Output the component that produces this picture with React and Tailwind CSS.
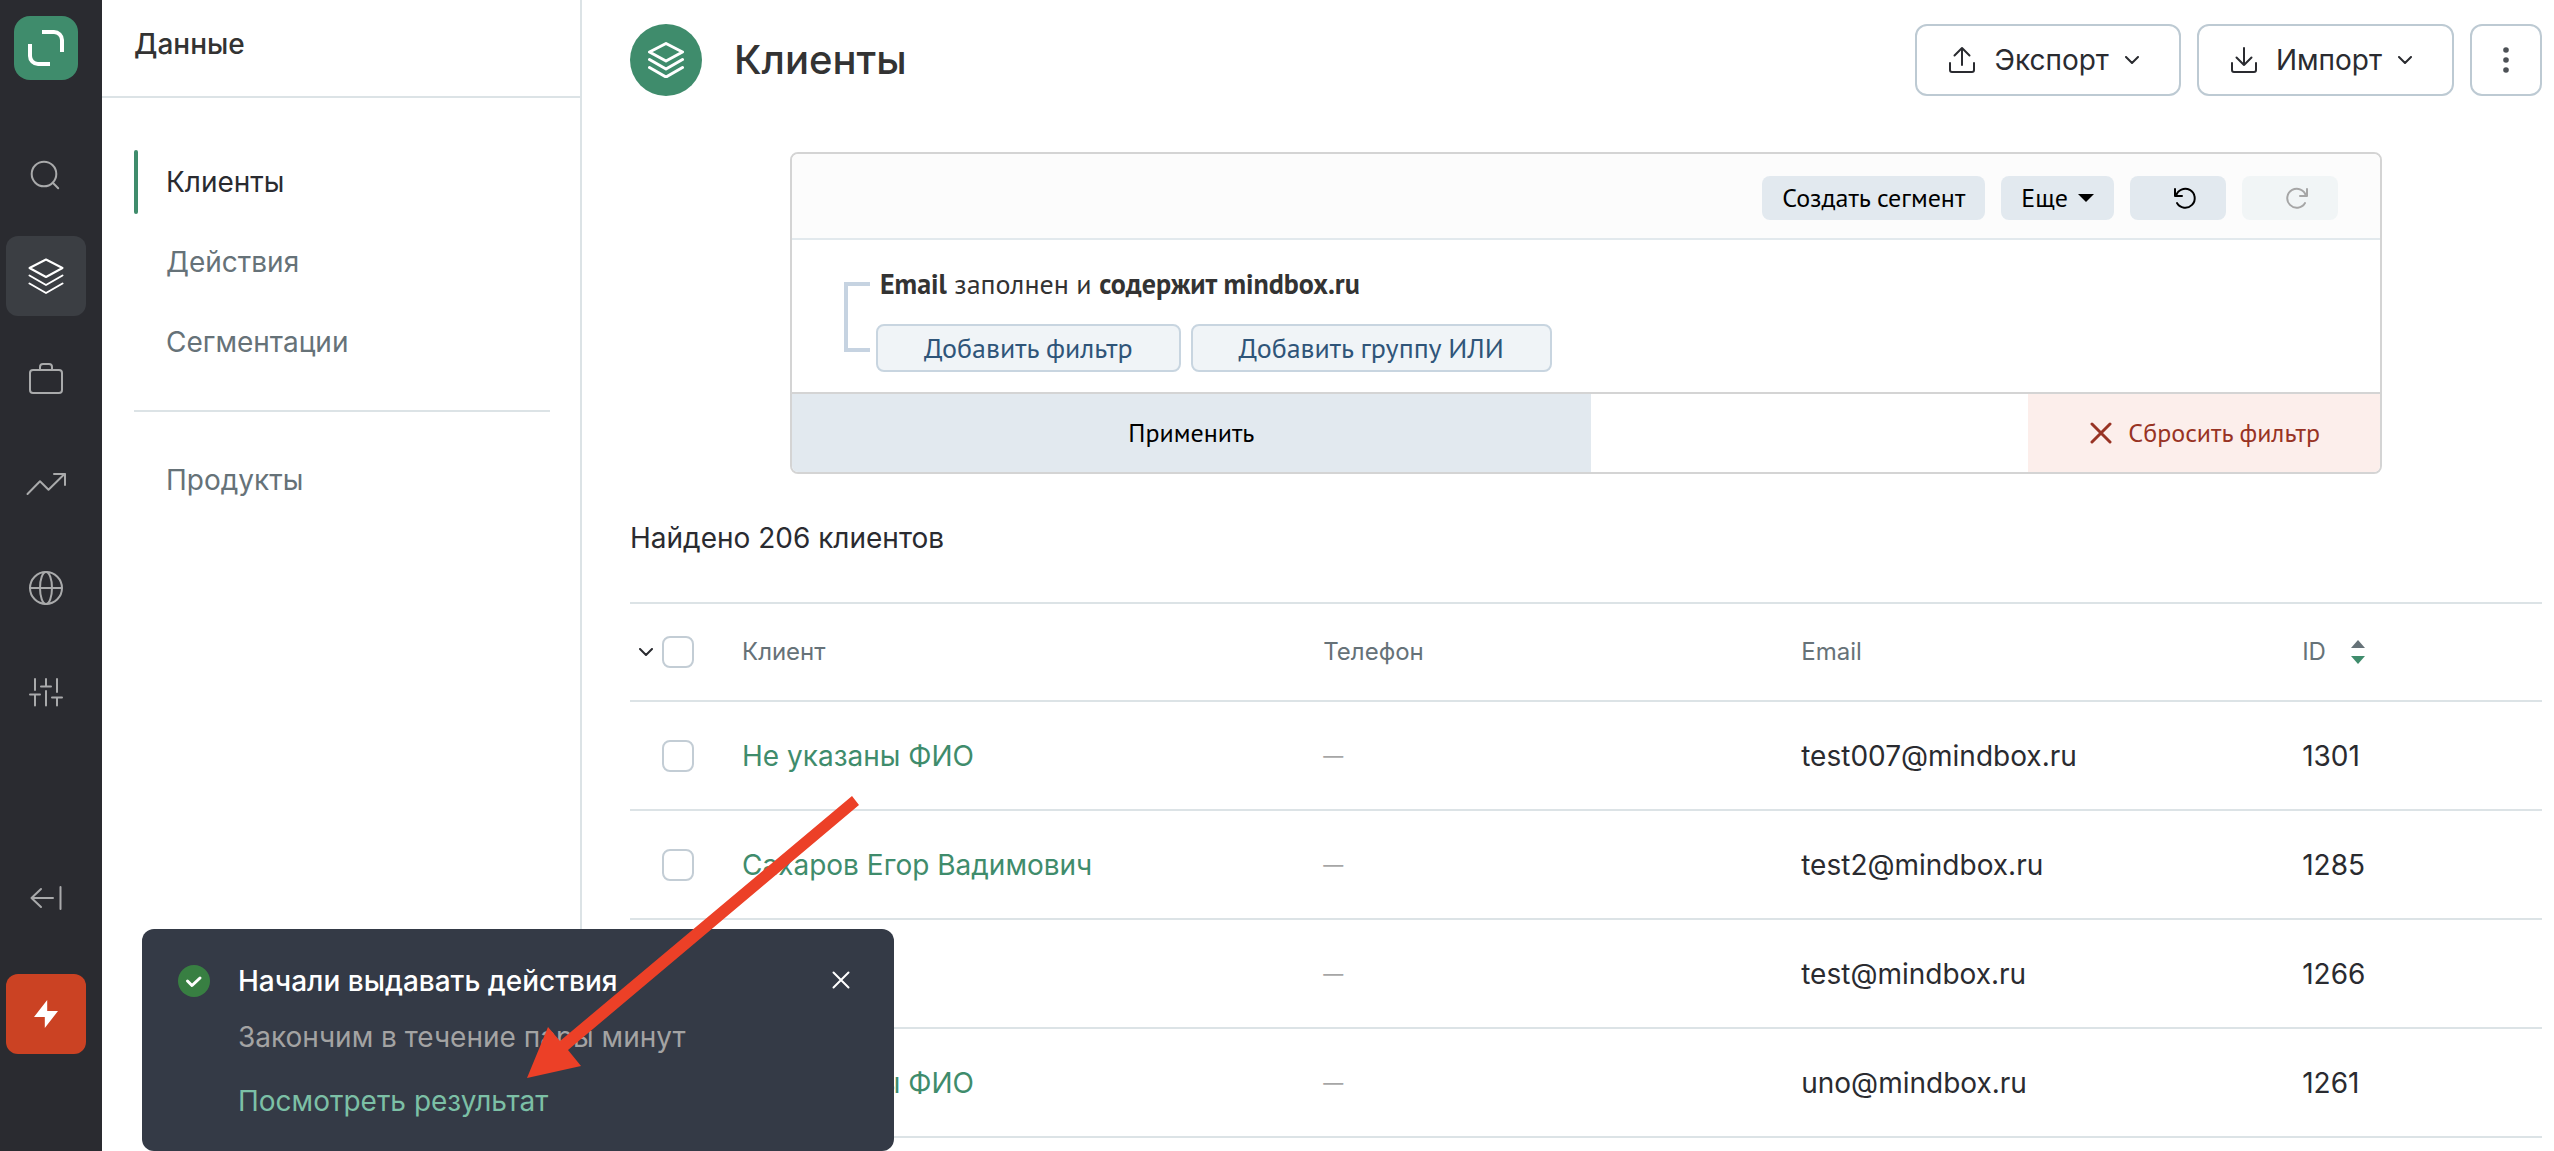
import React from "react";

const navItems = [
  { label: "Клиенты", active: true },
  { label: "Действия" },
  { label: "Сегментации" },
];

const clients = [
  { name: "Не указаны ФИО", email: "test007@mindbox.ru", id: 1301 },
  { name: "Сахаров Егор Вадимович", email: "test2@mindbox.ru", id: 1285 },
  { name: "Тест", email: "test@mindbox.ru", id: 1266 },
  { name: "Не указаны ФИО", email: "uno@mindbox.ru", id: 1261 },
];

const Icon = ({ size = 36, stroke = 2, className = "", children }) => (
  <svg
    width={size}
    height={size}
    viewBox={`0 0 ${size} ${size}`}
    fill="none"
    stroke="currentColor"
    strokeWidth={stroke}
    strokeLinecap="round"
    strokeLinejoin="round"
    className={`shrink-0 ${className}`}
    aria-hidden="true"
  >
    {children}
  </svg>
);

const LayersIcon = ({ stroke }) => (
  <Icon stroke={stroke}>
    <path d="M18 1.5 34.5 10 18 19 1.5 10Z" />
    <path d="M1.5 17.5 18 27l16.5-9.5" />
    <path d="M1.5 25.5 18 35l16.5-9.5" />
  </Icon>
);

const ChevronIcon = () => (
  <svg width="14" height="8" viewBox="0 0 14 8" fill="none" className="shrink-0" aria-hidden="true">
    <path d="M1 1l6 6 6-6" stroke="currentColor" strokeWidth="2" strokeLinecap="round" strokeLinejoin="round" />
  </svg>
);

const railItems = [
  {
    label: "Поиск",
    icon: (
      <Icon>
        <circle cx="16" cy="20" r="12.3" />
        <path d="M24.8 28.8l5.4 5.4" />
      </Icon>
    ),
  },
  { label: "Данные", active: true, icon: <LayersIcon stroke={2} /> },
  {
    label: "Кампании",
    icon: (
      <Icon>
        <rect x="2" y="8" width="32" height="23" rx="3" />
        <path d="M12 8V5a3 3 0 0 1 3-3h6a3 3 0 0 1 3 3v3" />
      </Icon>
    ),
  },
  {
    label: "Отчёты",
    icon: (
      <Icon size={40}>
        <path d="M1.5 30 14 17.3l8.5 8.4L38.5 10" />
        <path d="M28 10h11v11" />
      </Icon>
    ),
  },
  {
    label: "Интеграции",
    icon: (
      <Icon>
        <circle cx="18" cy="18" r="16" />
        <ellipse cx="18" cy="18" rx="6" ry="16" />
        <path d="M2 18h32" />
      </Icon>
    ),
  },
  {
    label: "Настройки",
    icon: (
      <Icon>
        <path d="M7 5v11M2 20.5h10M7 20.5v11M18 5v7.5M13 12.5h10M18 17v14.5M29 5v13M24 23.5h10M29 23.5v8" />
      </Icon>
    ),
  },
];

const Rail = () => (
  <aside className="flex w-[102px] shrink-0 flex-col bg-[#2a2b30] pt-4 pb-[97px] pl-1.5 text-[#a9aaab]">
    <a href="#home" aria-label="Mindbox" className="ml-2 h-16 w-16 rounded-2xl bg-[#3f8c6c]">
      <svg width="64" height="64" viewBox="0 0 64 64" fill="none" stroke="#fff" strokeWidth="4" aria-hidden="true">
        <path d="M28 16h12a8 8 0 0 1 8 8v12" />
        <path d="M16 28v12a8 8 0 0 0 8 8h12" />
      </svg>
    </a>

    <nav className="mt-[52px] flex flex-col gap-6">
      {railItems.map((item) => (
        <a
          key={item.label}
          href="#section"
          aria-label={item.label}
          className={`flex h-20 w-20 items-center justify-center rounded-xl ${
            item.active ? "bg-[#3b3e43] text-white" : ""
          }`}
        >
          {item.icon}
        </a>
      ))}
    </nav>

    <div className="mt-auto flex flex-col gap-9">
      <button type="button" aria-label="Свернуть меню" className="flex h-20 w-20 items-center justify-center">
        <Icon>
          <path d="M13 9l-9.5 9 9.5 9M3.5 18H25M32.5 7v22" />
        </Icon>
      </button>
      <button
        type="button"
        aria-label="Быстрые действия"
        className="flex h-20 w-20 items-center justify-center rounded-xl bg-[#cb4223] text-white"
      >
        <svg width="36" height="36" viewBox="0 0 36 36" fill="currentColor" aria-hidden="true">
          <path d="M19.2 4 6 21h10.8v11L30 15H19.2Z" />
        </svg>
      </button>
    </div>
  </aside>
);

const SidebarLink = ({ label, active }) => (
  <a
    href="#page"
    className={`flex h-16 items-center gap-7 text-[28px] leading-9 ${active ? "text-[#2a2b30]" : "text-[#667278]"}`}
  >
    <span className={`h-full w-1 rounded-full ${active ? "bg-[#3f8c6c]" : ""}`} />
    {label}
  </a>
);

const Sidebar = () => (
  <aside className="w-[480px] shrink-0 border-r-2 border-[#dce3e6]">
    <div className="flex h-[98px] items-center border-b-2 border-[#dce3e6] pb-2 pl-8">
      <h2 className="text-[28px] leading-9 font-medium text-[#333]">Данные</h2>
    </div>
    <nav className="pt-[52px] pr-[30px] pl-8">
      <div className="flex flex-col gap-4">
        {navItems.map((item) => (
          <SidebarLink key={item.label} {...item} />
        ))}
      </div>
      <hr className="my-9 border-t-2 border-[#dce3e6]" />
      <SidebarLink label="Продукты" />
    </nav>
  </aside>
);

const HeaderButton = ({ label, children }) => (
  <button
    type="button"
    className="flex h-[72px] items-center rounded-xl border-2 border-[#bdcad3] pr-10 pl-[31px] text-[28px] leading-9 text-[#2a2b30]"
  >
    <Icon size={28}>{children}</Icon>
    <span className="mr-4 ml-[18px]">{label}</span>
    <ChevronIcon />
  </button>
);

const PageHeader = () => (
  <header className="flex items-center gap-4">
    <span className="flex h-[72px] w-[72px] items-center justify-center rounded-full bg-[#3f8c6c] text-white">
      <LayersIcon stroke={3} />
    </span>
    <h1 className="mr-auto ml-4 text-[40px] leading-12 font-medium text-[#333]">Клиенты</h1>

    <HeaderButton label="Экспорт">
      <path d="M2 17v7a2 2 0 0 0 2 2h20a2 2 0 0 0 2-2v-7M14 19V2M6.5 9.5 14 2l7.5 7.5" />
    </HeaderButton>
    <HeaderButton label="Импорт">
      <path d="M2 17v7a2 2 0 0 0 2 2h20a2 2 0 0 0 2-2v-7M14 2v17M6.5 11.5 14 19l7.5-7.5" />
    </HeaderButton>
    <button
      type="button"
      aria-label="Ещё"
      className="flex h-[72px] w-[72px] items-center justify-center rounded-xl border-2 border-[#bdcad3] text-[#4d5156]"
    >
      <svg width="6" height="26" viewBox="0 0 6 26" fill="currentColor" aria-hidden="true">
        <circle cx="3" cy="3" r="2.8" />
        <circle cx="3" cy="13" r="2.8" />
        <circle cx="3" cy="23" r="2.8" />
      </svg>
    </button>
  </header>
);

const FilterPanel = () => (
  <section className="mx-40 mt-14 overflow-hidden rounded-lg border-2 border-[#d4d4d4] font-['PT_Sans','Lato',sans-serif]">
    <div className="flex h-[86px] items-center justify-end gap-4 border-b-2 border-[#e2e9ed] bg-[#fcfcfc] pt-1 pr-[42px] text-[26px] leading-8 text-black">
      <button type="button" className="h-11 rounded-lg bg-[#e2e9ef] px-5">
        Создать сегмент
      </button>
      <button type="button" className="flex h-11 items-center gap-2.5 rounded-lg bg-[#e2e9ef] px-5">
        Еще
        <svg width="16" height="8" viewBox="0 0 16 8" fill="currentColor" aria-hidden="true">
          <path d="M0 0h16L8 8Z" />
        </svg>
      </button>
      <button
        type="button"
        aria-label="Отменить"
        className="flex h-11 w-24 items-center justify-center rounded-lg bg-[#e2e9ef] pl-3.5"
      >
        <Icon size={24}>
          <path d="M2 3v7h7" />
          <path d="M3 10a9.5 9.5 0 1 1 1 7" />
        </Icon>
      </button>
      <button
        type="button"
        disabled
        aria-label="Повторить"
        className="flex h-11 w-24 items-center justify-center rounded-lg bg-[#f1f5f6] pl-3.5 text-[#a6a6a6]"
      >
        <Icon size={24}>
          <path d="M22 3v7h-7" />
          <path d="M21 10a9.5 9.5 0 1 0-1 7" />
        </Icon>
      </button>
    </div>

    <div className="flex gap-1.5 pb-5 pl-[52px] text-[28px] leading-9">
      <div className="mt-[42px] h-[70px] w-[26px] border-4 border-r-0 border-[#c6d3e1]" />
      <div className="pt-[26px]">
        <p className="pl-1 text-[#333]">
          <b>Email</b> заполнен и <b>содержит mindbox.ru</b>
        </p>
        <div className="mt-[22px] flex gap-2.5 text-[#2f5579]">
          <button type="button" className="h-12 rounded-lg border-2 border-[#c8d5e0] bg-[#f0f4f7] px-[46px]">
            Добавить фильтр
          </button>
          <button type="button" className="h-12 rounded-lg border-2 border-[#c8d5e0] bg-[#f0f4f7] px-[46px]">
            Добавить группу ИЛИ
          </button>
        </div>
      </div>
    </div>

    <div className="flex h-20 justify-between border-t-2 border-[#d4d4d4] text-[26px] leading-8">
      <button type="button" className="w-[50.3%] bg-[#e2e9ef] text-black">
        Применить
      </button>
      <button
        type="button"
        className="flex items-center gap-4 bg-[#fceeeb] pr-[60px] pl-[62px] text-[#983324]"
      >
        <Icon size={22} stroke={3}>
          <path d="M2 2l18 18M20 2 2 20" />
        </Icon>
        Сбросить фильтр
      </button>
    </div>
  </section>
);

const Checkbox = ({ label }) => (
  <input
    type="checkbox"
    aria-label={label}
    className="block h-8 w-8 shrink-0 appearance-none rounded-lg border-2 border-[#c3cdd5] bg-white"
  />
);

const ClientsTable = () => (
  <table className="mt-[46px] w-full table-fixed border-separate border-spacing-0 border-t-2 border-[#dce3e6] text-left">
    <colgroup>
      <col className="w-28" />
      <col className="w-[30.4%]" />
      <col className="w-[25%]" />
      <col className="w-[26.2%]" />
      <col />
    </colgroup>
    <thead>
      <tr className="text-2xl text-[#667278] *:h-[98px] *:border-b-2 *:border-[#dce3e6] *:font-normal">
        <th>
          <div className="flex items-center gap-[9px] pl-[9px]">
            <button type="button" aria-label="Выбрать" className="text-[#2a2b30]">
              <ChevronIcon />
            </button>
            <Checkbox label="Выбрать всех" />
          </div>
        </th>
        <th>Клиент</th>
        <th>Телефон</th>
        <th>Email</th>
        <th>
          <button type="button" className="flex items-center gap-6">
            ID
            <svg width="16" height="24" viewBox="0 0 16 24" aria-hidden="true">
              <path d="M1 8h14L8 0Z" fill="#667278" />
              <path d="M1 16h14l-7 8Z" fill="#3f8c6c" />
            </svg>
          </button>
        </th>
      </tr>
    </thead>
    <tbody>
      {clients.map((client) => (
        <tr
          key={client.id}
          className="text-[28px] leading-9 text-[#2a2b30] *:h-[109px] *:border-b-2 *:border-[#dce3e6]"
        >
          <td className="pl-8">
            <Checkbox label={client.name} />
          </td>
          <td>
            <a href="#client" className="text-[#3f8c6c]">
              {client.name}
            </a>
          </td>
          <td className="text-xl text-[#a6a6a6]">—</td>
          <td>{client.email}</td>
          <td>{client.id}</td>
        </tr>
      ))}
    </tbody>
  </table>
);

const Toast = () => (
  <div
    role="status"
    className="fixed bottom-0 left-[142px] flex h-[222px] w-[752px] items-start rounded-xl bg-[#343a46] pt-[34px] pr-11 pl-9 text-[28px] leading-9"
  >
    <svg width="32" height="32" viewBox="0 0 32 32" fill="none" className="mt-0.5 shrink-0" aria-hidden="true">
      <circle cx="16" cy="16" r="16" fill="#387f42" />
      <path d="M9.5 16l4.5 4.5 8-7.5" stroke="#fff" strokeWidth="3" strokeLinecap="round" strokeLinejoin="round" />
    </svg>
    <div className="mr-auto ml-7">
      <p className="font-medium text-white">Начали выдавать действия</p>
      <p className="mt-5 text-[#a3a3a3]">Закончим в течение пары минут</p>
      <a href="#result" className="mt-7 block text-[#7cc0a6]">
        Посмотреть результат
      </a>
    </div>
    <button type="button" aria-label="Закрыть" className="mt-2 text-white">
      <Icon size={18}>
        <path d="M1.5 1.5l15 15M16.5 1.5l-15 15" />
      </Icon>
    </button>
  </div>
);

const PointerArrow = () => (
  <svg
    width="334"
    height="284"
    viewBox="0 0 334 284"
    fill="#ec4027"
    className="pointer-events-none fixed bottom-[71px] left-[526px]"
    aria-hidden="true"
  >
    <path d="M1 282 22 231l12 14L326 0l7 9L42 254l13 16Z" />
  </svg>
);

export default function App() {
  return (
    <div className="flex min-h-screen bg-white font-['Inter',sans-serif]">
      <Rail />
      <Sidebar />
      <main className="min-w-0 flex-1 pt-6 pr-3 pl-12">
        <PageHeader />
        <FilterPanel />
        <p className="mt-[46px] text-[28px] leading-9 text-[#2a2b30]">Найдено 206 клиентов</p>
        <ClientsTable />
      </main>
      <Toast />
      <PointerArrow />
    </div>
  );
}
